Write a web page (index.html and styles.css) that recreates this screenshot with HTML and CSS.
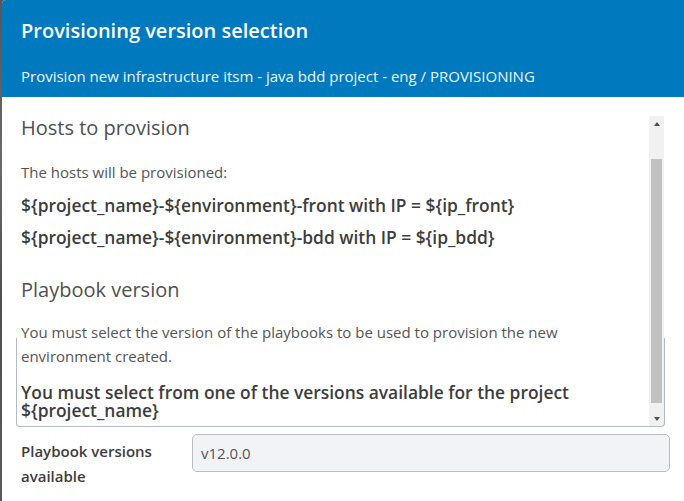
FILE: index.html
```html
<!DOCTYPE html>
<html lang="en">
<head>
<meta charset="utf-8">
<title>Provisioning version selection</title>
<link rel="stylesheet" href="styles.css">
</head>
<body>
<div class="modal">
  <header class="modal-header">
    <h1 class="modal-title">Provisioning version selection</h1>
    <p class="modal-subtitle">Provision new infrastructure itsm - java bdd project - eng / PROVISIONING</p>
  </header>
  <div class="modal-body">
    <div class="scroll-box">
      <div class="scroll-content">
        <h2 class="section-title">Hosts to provision</h2>
        <p class="text">The hosts will be provisioned:</p>
        <p class="host">${project_name}-${environment}-front with IP = ${ip_front}</p>
        <p class="host">${project_name}-${environment}-bdd with IP = ${ip_bdd}</p>
        <h2 class="section-title section-gap">Playbook version</h2>
        <p class="text">You must select the version of the playbooks to be used to provision the new environment created.</p>
        <p class="notice">You must select from one of the versions available for the project ${project_name}</p>
      </div>
      <div class="scrollbar">
        <div class="sb-button"><span class="arrow-up"></span></div>
        <div class="sb-track"><div class="sb-thumb"></div></div>
        <div class="sb-button"><span class="arrow-down"></span></div>
      </div>
    </div>
    <div class="form-row">
      <label class="form-label" for="version">Playbook versions available</label>
      <div class="form-input" id="version">v12.0.0</div>
    </div>
  </div>
</div>
</body>
</html>
```

FILE: styles.css
```css
html, body {
  margin: 0;
  padding: 0;
}
body {
  background: linear-gradient(#5b5560 0, #5d5d5d 60px, #6a6a6a 160px, #4f4f4f 300px, #5a5a5a 501px);
  font-family: "Open Sans", "Noto Sans", sans-serif;
  width: 684px;
  height: 501px;
  overflow: hidden;
}
.modal {
  margin-left: 2px;
  width: 682px;
  height: 501px;
  background: #fff;
  border-radius: 4px 0 0 0;
  overflow: hidden;
}
.modal-header {
  background: #0079be;
  height: 97px;
  box-sizing: border-box;
  padding: 17px 19px 0;
  color: #fff;
}
.modal-title {
  margin: 0;
  font-size: 20px;
  line-height: 28px;
  font-weight: 600;
}
.modal-subtitle {
  margin: 21px 0 0;
  font-size: 15px;
  line-height: 20px;
  color: #eef5fa;
}
.modal-body {
  padding: 19px 0 0 14px;
}
.scroll-box {
  position: relative;
  width: 649px;
  height: 311px;
  box-sizing: border-box;
  padding: 0 1px 1px 0;
  display: flex;
}
.scroll-box::after {
  content: "";
  position: absolute;
  left: 0;
  right: 0;
  top: 222px;
  bottom: 0;
  border: 1px solid #b3bbc3;
  border-top: none;
  border-radius: 0 0 4px 4px;
  pointer-events: none;
}
.scroll-content {
  flex: 1;
  padding-left: 5px;
  padding-right: 8px;
}
.section-title {
  margin: 0 0 20px;
  font-size: 20px;
  line-height: 24px;
  font-weight: 400;
  color: #4f4f4f;
}
.section-gap {
  margin-top: 25px;
  margin-bottom: 18px;
}
.text {
  margin: 0;
  font-size: 15px;
  line-height: 24px;
  color: #555;
}
.host {
  margin: 0;
  font-size: 17.4px;
  line-height: 32px;
  font-weight: 600;
  color: #3d3d3d;
}
.text + .host {
  margin-top: 5px;
}
.notice {
  margin: 15px 0 0;
  font-size: 17.4px;
  line-height: 18px;
  font-weight: 600;
  color: #3d3d3d;
}
.scrollbar {
  width: 15px;
  display: flex;
  flex-direction: column;
  background: #f1f1f1;
}
.sb-button {
  height: 15px;
  display: flex;
  align-items: center;
  justify-content: center;
}
.arrow-up, .arrow-down {
  width: 0;
  height: 0;
  border-left: 3.5px solid transparent;
  border-right: 3.5px solid transparent;
}
.arrow-up {
  border-bottom: 4px solid #505050;
}
.arrow-down {
  border-top: 4px solid #505050;
}
.sb-track {
  flex: 1;
  padding: 28px 2px 0;
}
.sb-thumb {
  height: 244px;
  background: #c1c1c1;
}
.form-row {
  display: flex;
  margin-top: 7px;
}
.form-label {
  width: 171px;
  padding: 5px 0 0 5px;
  font-size: 15px;
  line-height: 25px;
  font-weight: 600;
  color: #3d3d3d;
}
.form-input {
  width: 478px;
  height: 38px;
  box-sizing: border-box;
  border: 1px solid #b5bdc5;
  border-radius: 5px;
  background: #f2f3f7;
  padding: 0 8px;
  font-size: 15px;
  line-height: 36px;
  color: #555;
}
```
